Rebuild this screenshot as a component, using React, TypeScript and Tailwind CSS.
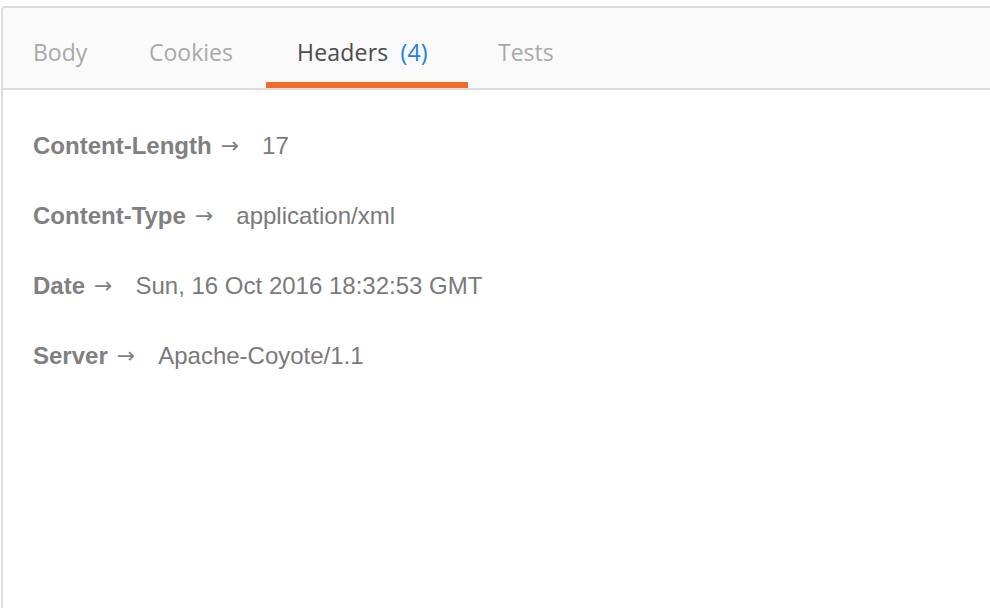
import React from 'react';

const tabs = [
  { name: 'Body', width: 'w-[114px]', pad: 'pl-[30px]' },
  { name: 'Cookies', width: 'w-[149px]', pad: 'pl-[32px]' },
  { name: 'Headers', count: 4, width: 'w-[202px]', pad: 'pl-[31px]', active: true },
  { name: 'Tests', width: 'w-[120px]', pad: 'pl-[30px]' },
];

const headers = [
  { key: 'Content-Length', value: '17' },
  { key: 'Content-Type', value: 'application/xml' },
  { key: 'Date', value: 'Sun, 16 Oct 2016 18:32:53 GMT' },
  { key: 'Server', value: 'Apache-Coyote/1.1' },
];

export default function App() {
  return (
    <div className="w-[990px] h-[608px] bg-white pt-[6px] pl-[1px] overflow-hidden">
      <div className="h-full border-l-2 border-t-2 border-[#dcdcdc] rounded-tl-[4px] bg-white">
        {/* Tab bar */}
        <div className="flex h-[82px] bg-[#fafafa] border-b-2 border-[#dcdcdc] rounded-tl-[3px]">
          {tabs.map((tab) => (
            <div
              key={tab.name}
              className={`relative flex items-center ${tab.width} ${tab.pad} text-[23px] font-['Open_Sans',sans-serif] ${
                tab.active ? 'text-[#4a4a4a] tracking-[0.2px]' : 'text-[#a9a9a9]'
              }`}
            >
              <span className="mt-[8px]">
                {tab.name}
                {tab.count !== undefined && <span className="text-[#1a7ee6] ml-[12px]">({tab.count})</span>}
              </span>
              {tab.active && <div className="absolute left-0 right-0 bottom-0 h-[6px] bg-[#f26b2a]" />}
            </div>
          ))}
        </div>

        {/* Header rows */}
        <div className="pt-[21px] pl-[30px] font-['Liberation_Sans',Arial,sans-serif] text-[24px] text-[#808080]">
          {headers.map((h) => (
            <div key={h.key} className="h-[70px] flex items-center">
              <span className="font-bold">{h.key}</span>
              <span className="ml-[9px] font-['DejaVu_Sans',sans-serif] text-[22px] leading-none">→</span>
              <span className="ml-[23px] text-[#7a7a7a]">{h.value}</span>
            </div>
          ))}
        </div>
      </div>
    </div>
  );
}
